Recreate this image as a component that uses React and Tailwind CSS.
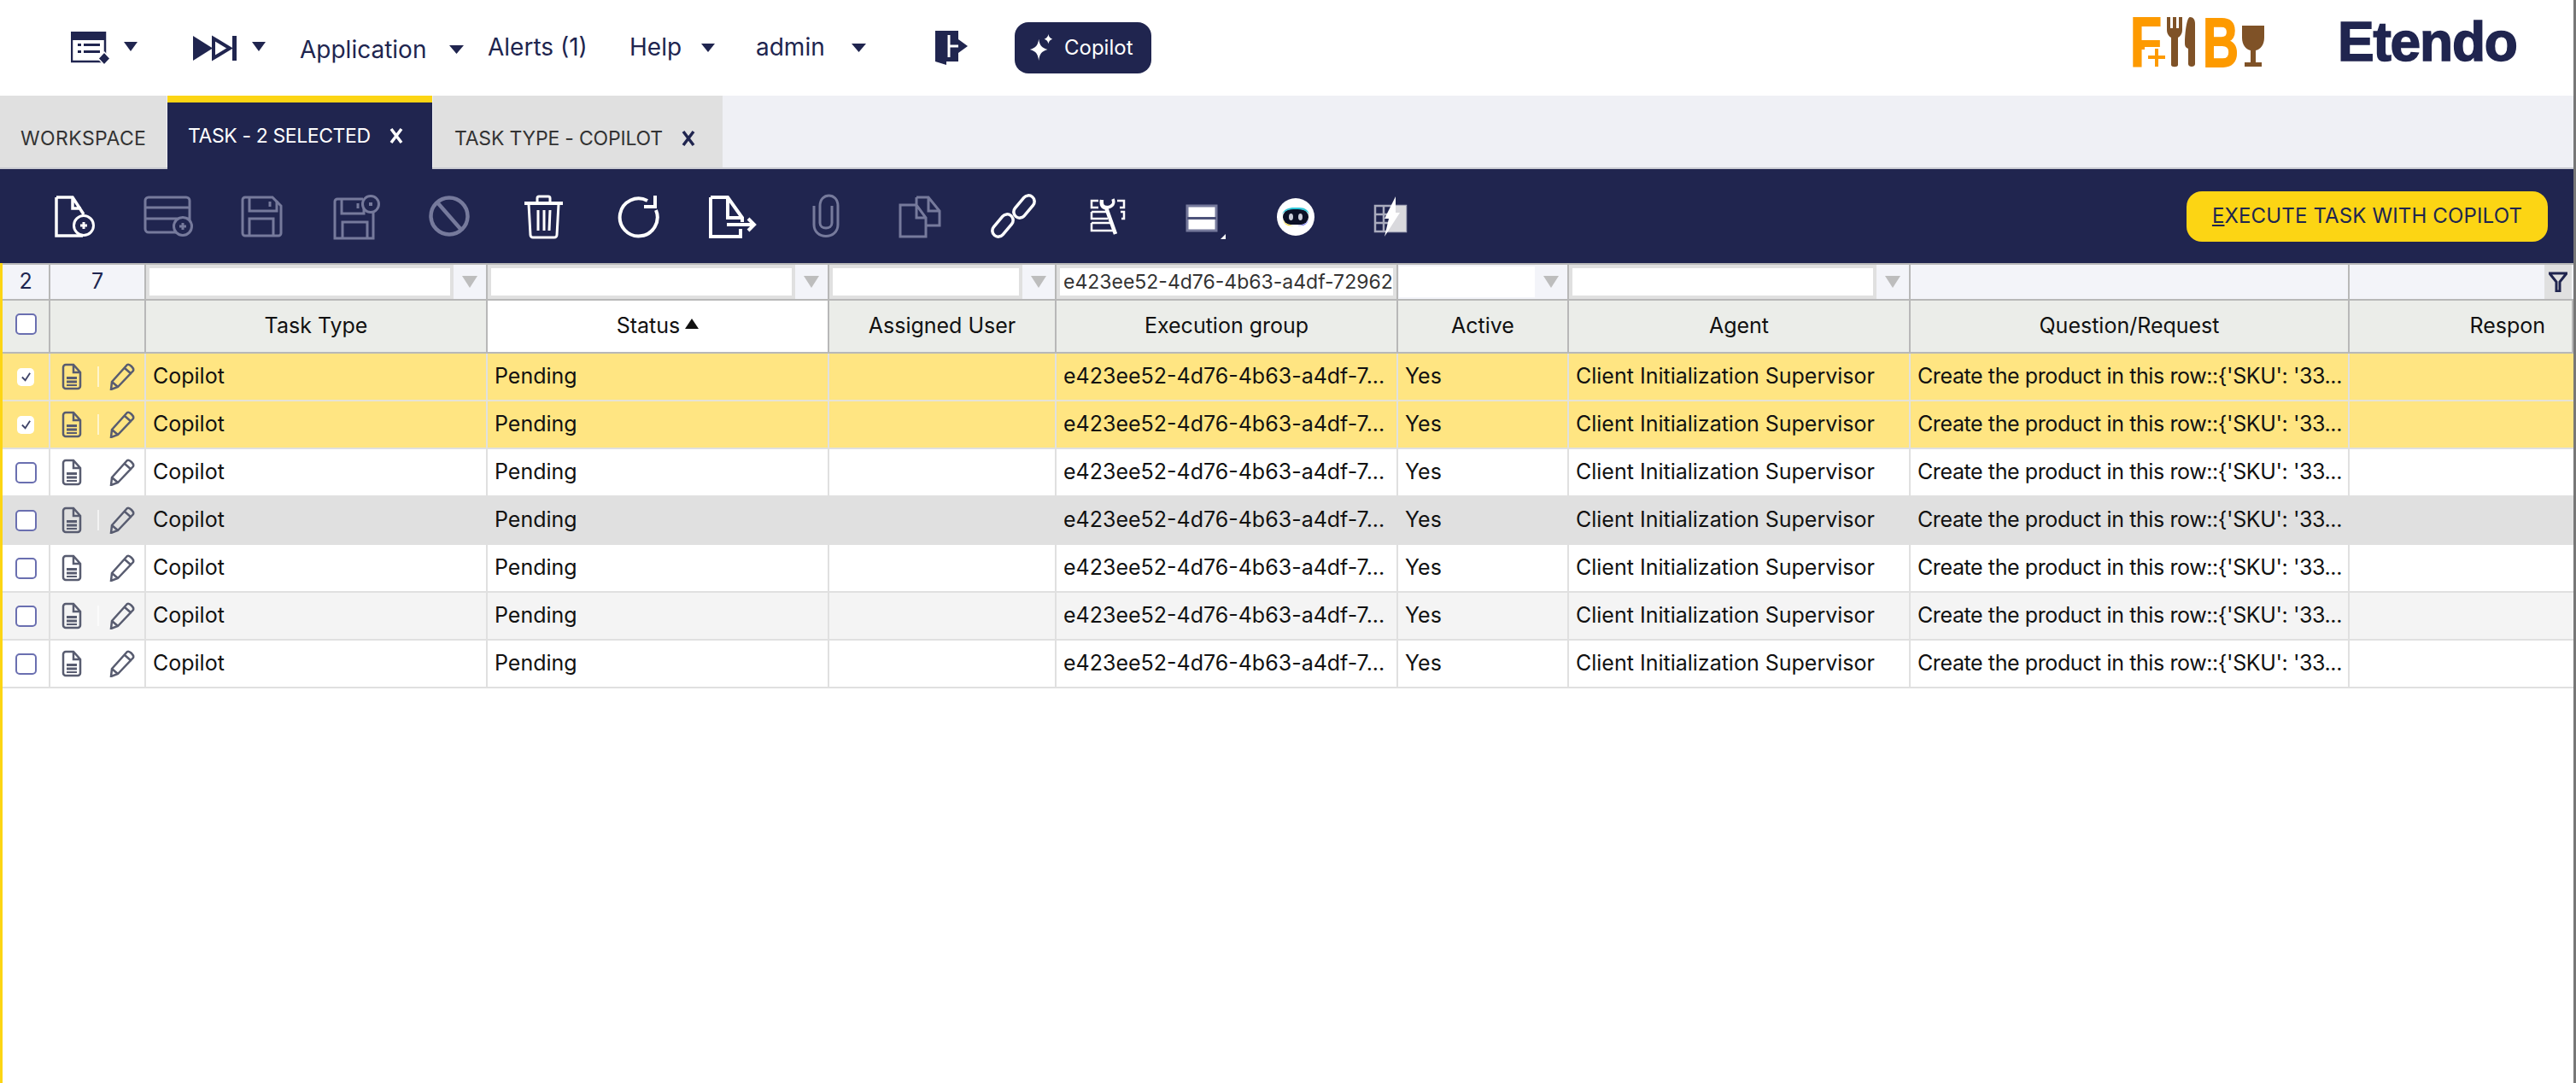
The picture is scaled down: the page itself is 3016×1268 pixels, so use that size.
const font = "font-['Inter','Liberation_Sans',sans-serif]";

const columns = [
  { label: 'Task Type', width: 'w-[400px]', cell: 'Copilot', filter: 'combo' },
  { label: 'Status', width: 'w-[400px]', cell: 'Pending', filter: 'combo', sorted: true },
  { label: 'Assigned User', width: 'w-[266px]', cell: '', filter: 'combo' },
  { label: 'Execution group', width: 'w-[400px]', cell: 'e423ee52-4d76-4b63-a4df-7...', filter: 'text' },
  { label: 'Active', width: 'w-[200px]', cell: 'Yes', filter: 'plain' },
  { label: 'Agent', width: 'w-[400px]', cell: 'Client Initialization Supervisor', filter: 'combo' },
  { label: 'Question/Request', width: 'w-[514px]', cell: "Create the product in this row::{'SKU': '33...", filter: 'none', tight: true },
];

const rows = [
  { bg: 'bg-[#ffe582]', checked: true, line: 'border-[#e6e3d6]' },
  { bg: 'bg-[#ffe582]', checked: true, line: 'border-[#e0e0e0]' },
  { bg: 'bg-white', line: 'border-[#e0e0e0]' },
  { bg: 'bg-[#e0e0e0]', line: 'border-[#e0e0e0]' },
  { bg: 'bg-white', line: 'border-[#e0e0e0]' },
  { bg: 'bg-[#f4f4f4]', line: 'border-[#e0e0e0]' },
  { bg: 'bg-white', line: 'border-[#e0e0e0]' },
];

function Caret({ className = '' }) {
  return (
    <svg viewBox="0 0 16 11" preserveAspectRatio="none" className={className}>
      <path d="M0 0h16L8 11z" fill="currentColor" />
    </svg>
  );
}

function Icon({ children, dim }) {
  return (
    <svg
      viewBox="0 0 52 52"
      fill="none"
      stroke="currentColor"
      strokeWidth="3"
      className={`w-[52px] h-[52px] overflow-visible ${dim ? 'text-[#767a9c]' : 'text-white'}`}
    >
      {children}
    </svg>
  );
}

const navy = '#20254f';

const tools = [
  <Icon><path d="M5 4v45h31M5 4h19l13 20M24 4v13h10" strokeWidth="3.500" /><circle cx="37" cy="37" r="11.500" fill={navy} /><path d="M37 33v8M33 37h8" /></Icon>,
  <Icon dim><rect x="-1" y="4" width="52" height="41" rx="4" /><path d="M-1 16h52M-1 29h52" /><circle cx="43" cy="38" r="10.500" fill={navy} /><path d="M43 34v8M39 38h8" /></Icon>,
  <Icon dim><path d="M3 7a3 3 0 0 1 3-3h32l10 10v32a3 3 0 0 1-3 3H6a3 3 0 0 1-3-3z" /><path d="M11 4v16h32V8M35 9v6M11 49V29h28v20" /></Icon>,
  <Icon dim><path d="M1 9a3 3 0 0 1 3-3h30M46 20v32H1V9" /><path d="M9 6v17h26V6M28 11v6M10 52V33h29v19" /><circle cx="43" cy="12" r="9.500" fill={navy} /><path d="M41 12h4" strokeWidth="4" /></Icon>,
  <Icon dim><circle cx="25" cy="26" r="21.500" strokeWidth="4.500" /><path d="M11 10l28 32" strokeWidth="4.500" /></Icon>,
  <Icon><path d="M3 11h45" strokeWidth="4" /><path d="M18 10V5a2 2 0 0 1 2-2h11a2 2 0 0 1 2 2v5" /><path d="M8 12l2 36a3 3 0 0 0 3 3h25a3 3 0 0 0 3-3l2-36M19 19v24M26 19v24M33 19l-1 24" /></Icon>,
  <Icon><path d="M37 8A22 22 0 1 0 47 19" strokeWidth="4" /><path d="M46 2v13H33" strokeWidth="4" /></Icon>,
  <Icon><path d="M1 4v46h35V41M1 4h20l17 24v5M21 4v24h17M20 36h31M45 29l7 7-7 7" strokeWidth="4" /></Icon>,
  <Icon dim><path d="M12 14v22c0 18 28 18 28 0V14C40-2 19-2 19 14v20c0 8 14 8 14 0V14" /></Icon>,
  <Icon dim><path d="M22 4h14l13 16v17H33M36 4v16h13" /><path d="M22 4v9M3 13h19l11 15v22H3zM22 13v15h11" /></Icon>,
  <Icon><rect x="-2" y="30" width="30" height="14" rx="7" transform="rotate(-50 13 37)" strokeWidth="3.500" /><rect x="23" y="8" width="30" height="14" rx="7" transform="rotate(-50 38 15)" strokeWidth="3.500" /></Icon>,
  <Icon><path d="M15 8H7v8h8M37 8h8v8h-5M7 21h17M41 21h4v8h-3M7 21v8h19M7 34h22M7 34v9h25" strokeWidth="2.500" /><path d="M19 7c-1 6 1 9 5 9l11 31" strokeWidth="4.500" /><path d="M32 6c2 5 0 9-7 10" strokeWidth="3.500" /></Icon>,
  <svg viewBox="0 0 52 52" className="w-[52px] h-[52px] overflow-visible">
    <rect x="9" y="14" width="34" height="29" fill="#fff" stroke="#767a9c" strokeWidth="3" />
    <path d="M9 28.500h34" stroke="#4d527a" strokeWidth="3" />
    <path d="M54 47v6h-6z" fill="#fff" />
  </svg>,
  <svg viewBox="0 0 52 52" className="w-[52px] h-[52px]">
    <circle cx="26" cy="27" r="22" fill="#fff" />
    <rect x="11" y="18" width="30" height="18" rx="9" fill="#0b1026" />
    <path d="M10 24c2-6 8-8 14-8h6c6 0 10 2 12 8-4-5-8-6-16-6s-12 1-16 6z" fill="#2fc8d8" />
    <path d="M11 30c2 5 7 7 13 7-6 1-11 0-13-7z" fill="#f5d018" />
    <path d="M41 30c-2 5-7 7-13 7 6 1 11 0 13-7z" fill="#6a6ff0" />
    <ellipse cx="20.500" cy="27" rx="2.500" ry="4" fill="#c8ccd8" />
    <ellipse cx="31.500" cy="27" rx="2.500" ry="4" fill="#c8ccd8" />
  </svg>,
  <svg viewBox="0 0 52 52" className="w-[52px] h-[52px]" fill="none">
    <path d="M9 14h36v30H9zM9 24h18M9 34h18M19 14v30" stroke="#a9abbd" strokeWidth="2.500" />
    <path d="M32 14h13v30H22z" fill="#d9d9dd" />
    <path d="M33 3v19h5L20 50l5-21h-5z" fill="#fff" />
  </svg>,
];

function FbLogo() {
  return (
    <svg viewBox="0 0 158 60" className="w-[158px] h-[60px] overflow-visible">
      <text x="0" y="59" fontFamily="'Liberation Sans', sans-serif" fontWeight="700" fontSize="82" fill="#fd9a00" stroke="#fd9a00" strokeWidth="2" textLength="37" lengthAdjust="spacingAndGlyphs">F</text>
      <rect x="17" y="36" width="28" height="24" fill="#fff" />
      <path d="M29 38h4v8h8v4h-8v9h-4v-9h-8v-4h8z" fill="#fd9a00" />
      <path d="M43 1h4v13h3V1h4v13h3V1h4v15c0 5-3 8-5 9v32c0 3-8 3-8 0V25c-2-1-5-4-5-9z" fill="#7f5227" />
      <path d="M70 1c4 0 6 3 6 8v47c0 4-8 4-8 0V38c-3-1-4-3-4-6 0-10 2-31 6-31z" fill="#7f5227" />
      <text x="85" y="59" fontFamily="'Liberation Sans', sans-serif" fontWeight="700" fontSize="82" fill="#fd9a00" stroke="#fd9a00" strokeWidth="2" textLength="42" lengthAdjust="spacingAndGlyphs">B</text>
      <path d="M131 11h26v14c0 9-5 14-10 15v14h7v5h-20v-5h7V40c-5-1-10-6-10-15z" fill="#7f5227" />
    </svg>
  );
}

function HeaderBar() {
  return (
    <div className="h-[112px] flex items-center bg-white text-[28px] leading-[40px] text-[#20254f] whitespace-nowrap">
      <svg viewBox="0 0 46 39" className="ml-[83px] w-[46px] h-[39px] mt-[1px]">
        <path d="M1 1h39v34H1z" fill="none" stroke={navy} strokeWidth="2.500" />
        <path d="M1 1h39v9H1zM8 14h4v3H8zM15 14h19v3H15zM8 22h4v3H8zM15 22h19v3H15z" fill={navy} />
        <path d="M39 24l7 7.500-7 7.500-7-7.500z" fill={navy} stroke="#fff" strokeWidth="1.500" />
      </svg>
      <Caret className="w-[16px] h-[11px] text-[#20254f] ml-[16px] mb-[4px]" />
      <svg viewBox="0 0 52 31" className="ml-[64px] w-[52px] h-[31px] text-[#20254f]">
        <path d="M1 1l23 14.500L1 30z" fill="currentColor" />
        <path d="M25 4l19 11.500L25 27z" fill="none" stroke="currentColor" strokeWidth="4" />
        <path d="M47 1h5v29h-5z" fill="currentColor" />
      </svg>
      <Caret className="w-[16px] h-[11px] text-[#20254f] ml-[18px] mb-[4px]" />
      <span className="ml-[40px] w-[148px] mt-[4px]">Application</span>
      <Caret className="w-[17px] h-[10px] text-[#20254f] ml-[27px] mt-[4px]" />
      <span className="ml-[28px] w-[117px] mb-[2px]">Alerts (1)</span>
      <span className="ml-[49px] w-[61px] mb-[2px]">Help</span>
      <Caret className="w-[16px] h-[10px] text-[#20254f] ml-[23px]" />
      <span className="ml-[48px] w-[91px] mb-[2px]">admin</span>
      <Caret className="w-[17px] h-[10px] text-[#20254f] ml-[21px]" />
      <svg viewBox="0 0 40 42" className="ml-[80px] w-[40px] h-[42px] mb-[1px]">
        <path d="M1 1h27v36H14v4L1 37z" fill={navy} />
        <path d="M17 6v26M17 19h11" stroke="#fff" strokeWidth="3" fill="none" />
        <path d="M28 11l11 8-11 8z" fill={navy} />
      </svg>
      <div className="ml-[54px] w-[160px] h-[60px] rounded-[16px] bg-[#20254f] flex items-center text-white">
        <svg viewBox="0 0 32 36" className="ml-[16px] w-[30px] h-[34px]" fill="currentColor">
          <path d="M13 7c1 8 4 11 11 13-7 2-10 5-11 14-1-9-4-12-11-14 7-2 10-5 11-13z" />
          <path d="M25 1c.5 3 2 5 5 6-3 1-4.500 3-5 6-.5-3-2-5-5-6 3-1 4.500-3 5-6z" />
        </svg>
        <span className="ml-[12px] text-[24px]">Copilot</span>
      </div>
      <div className="ml-auto mr-[65px] flex items-center">
        <div className="mb-[14px]"><FbLogo /></div>
        <span className="ml-[85px] w-[211px] font-['Liberation_Sans',sans-serif] font-bold text-[64px] leading-[60px] tracking-[-1.2px] [-webkit-text-stroke:1.5px_#20254f] text-[#20254f] mb-[14px]">Etendo</span>
      </div>
    </div>
  );
}

function TabClose({ className = '' }) {
  return (
    <svg viewBox="0 0 16 20" className={`w-[16px] h-[20px] ${className}`} fill="none" stroke="currentColor" strokeWidth="3.500">
      <path d="M2 2l12 16M14 2L2 18" />
    </svg>
  );
}

function TabBar() {
  return (
    <div className="h-[86px] bg-[#eff0f5] flex border-b-2 border-[#c9cad1] text-[23px] whitespace-nowrap">
      <div className="w-[195px] bg-[#e0e0e0] text-[#333333] flex items-center pt-[16px] pl-[24px] tracking-[0.4px]">WORKSPACE</div>
      <div className="ml-[1px] w-[310px] bg-[#20254f] border-t-8 border-[#fcd514] h-[86px] text-white flex items-center pl-[24px] tracking-[-0.4px]">
        <span>TASK - 2 SELECTED</span>
        <TabClose className="ml-[22px]" />
      </div>
      <div className="ml-[1px] w-[339px] bg-[#e0e0e0] text-[#333333] flex items-center pt-[16px] pl-[25px] tracking-[-0.2px]">
        <span>TASK TYPE - COPILOT</span>
        <TabClose className="ml-[22px] text-[#20254f]" />
      </div>
    </div>
  );
}

function Toolbar() {
  return (
    <div className="h-[110px] bg-[#20254f] flex items-center pl-[32px]">
      {tools.map((t, i) => (
        <div key={i} className="w-[110px] flex justify-center">{t}</div>
      ))}
      <button className="ml-auto mr-[30px] w-[423px] h-[59px] rounded-[18px] bg-[#fcd514] text-[#20254f] text-[24px] tracking-[0.15px]">
        <span className="underline">E</span>XECUTE TASK WITH COPILOT
      </button>
    </div>
  );
}

function FilterCell({ col }) {
  return (
    <div className={`${col.width} h-full shrink-0 border-r-2 border-[#b8b8b8] bg-[#f3f4f9] flex`}>
      {col.filter === 'combo' && (
        <>
          <div className="flex-1 border-[4px] border-[#e0e0e0] bg-white" />
          <div className="w-[38px] flex items-center justify-center">
            <Caret className="w-[18px] h-[14px] text-[#bdbdbd]" />
          </div>
        </>
      )}
      {col.filter === 'plain' && (
        <>
          <div className="flex-1 my-[2px] ml-[1px] bg-white" />
          <div className="w-[38px] flex items-center justify-center">
            <Caret className="w-[18px] h-[14px] text-[#bdbdbd]" />
          </div>
        </>
      )}
      {col.filter === 'text' && (
        <div className="flex-1 border-[4px] border-[#e0e0e0] bg-white text-[23px] leading-[28px] text-[#333] flex items-center pl-[4px] overflow-hidden whitespace-nowrap">
          e423ee52-4d76-4b63-a4df-72962
        </div>
      )}
    </div>
  );
}

function Checkbox({ checked }) {
  if (checked) {
    return (
      <div className="w-[20px] h-[21px] rounded-[5px] bg-white flex items-center justify-center">
        <svg viewBox="0 0 14 14" className="w-[13px] h-[13px]"><path d="M2 7l4 4 6-9" fill="none" stroke="#3f4468" strokeWidth="2" /></svg>
      </div>
    );
  }
  return <div className="w-[25px] h-[25px] rounded-[5px] border-2 border-[#6a6fb0] bg-white" />;
}

function GridRow({ row }) {
  return (
    <div className={`flex h-[56px] border-b-2 ${row.line} ${row.bg} text-[25px] text-[#111]`}>
      <div className="w-[56px] shrink-0 border-r-2 border-[#e0e0e0] flex items-center justify-center">
        <Checkbox checked={row.checked} />
      </div>
      <div className="w-[112px] shrink-0 border-r-2 border-[#e0e0e0] flex items-center">
        <svg viewBox="0 0 24 32" className="ml-[13px] w-[24px] h-[32px] text-[#585c70]" fill="none" stroke="currentColor" strokeWidth="2.500">
          <path d="M2 5a3 3 0 0 1 3-3h9l8 9v16a3 3 0 0 1-3 3H5a3 3 0 0 1-3-3zM14 2v9h8" />
          <path d="M6 16h12v3H6zM6 20.500h12v3H6zM6 25h12v2H6z" stroke="none" fill="currentColor" />
        </svg>
        <div className="ml-[18px] w-[2px] h-[24px] bg-white/60" />
        <svg viewBox="0 0 30 32" className="ml-[12px] w-[30px] h-[32px] text-[#585c70]" fill="none" stroke="currentColor" strokeWidth="2.500">
          <path d="M21 2c2-1 3 0 5 2s3 3 2 5L10 28l-8 3 1-9zM18 6l8 7M3 22l7 6" />
        </svg>
      </div>
      {columns.map((c, i) => (
        <div key={i} className={`${c.width} shrink-0 border-r-2 border-[#e0e0e0] pl-[8px] flex items-center whitespace-nowrap overflow-hidden ${c.tight ? 'tracking-[-0.4px]' : ''}`}>
          {c.cell}
        </div>
      ))}
    </div>
  );
}

export default function App() {
  return (
    <div className={`w-[3016px] h-[1268px] bg-white overflow-hidden border-r-[3px] border-[#777777] ${font}`}>
      <HeaderBar />
      <TabBar />
      <Toolbar />
      <div className="h-[960px] border-l-[3px] border-[#fcd514]">
        <div className="h-[44px] flex border-y-2 border-[#b8b8b8] bg-[#f3f4f9] text-[#20254f] text-[25px]">
          <div className="w-[56px] shrink-0 border-r-2 border-[#b8b8b8] flex items-center justify-center">2</div>
          <div className="w-[112px] shrink-0 border-r-2 border-[#b8b8b8] flex items-center justify-center">7</div>
          {columns.map((c, i) => <FilterCell key={i} col={c} />)}
          <div className="flex-1 flex justify-end">
            <div className="w-[32px] mr-[2px] bg-[#e0e0e0] flex items-center justify-center">
              <svg viewBox="0 0 22 24" className="w-[22px] h-[24px]" fill="none" stroke="#20254f" strokeWidth="3"><path d="M1 2h20L13 12v11H9V12z" /></svg>
            </div>
          </div>
        </div>
        <div className="h-[62px] flex border-b-[2px] border-[#b8b8b8] bg-[#ebede9] text-[25px] text-[#111]">
          <div className="w-[56px] shrink-0 border-r-2 border-[#b8b8b8] flex items-center justify-center pb-[6px]"><Checkbox /></div>
          <div className="w-[112px] shrink-0 border-r-2 border-[#b8b8b8]" />
          {columns.map((c, i) => (
            <div key={i} className={`${c.width} shrink-0 border-r-2 border-[#b8b8b8] flex items-center justify-center ${c.sorted ? 'bg-white' : ''}`}>
              {c.label}
              {c.sorted && <Caret className="w-[16px] h-[12px] rotate-180 ml-[6px] mb-[6px] text-[#111]" />}
            </div>
          ))}
          <div className="flex-1 flex justify-end items-center pr-[31px] border-r-2 border-[#b8b8b8]">Respon</div>
        </div>
        {rows.map((r, i) => <GridRow key={i} row={r} />)}
      </div>
    </div>
  );
}
